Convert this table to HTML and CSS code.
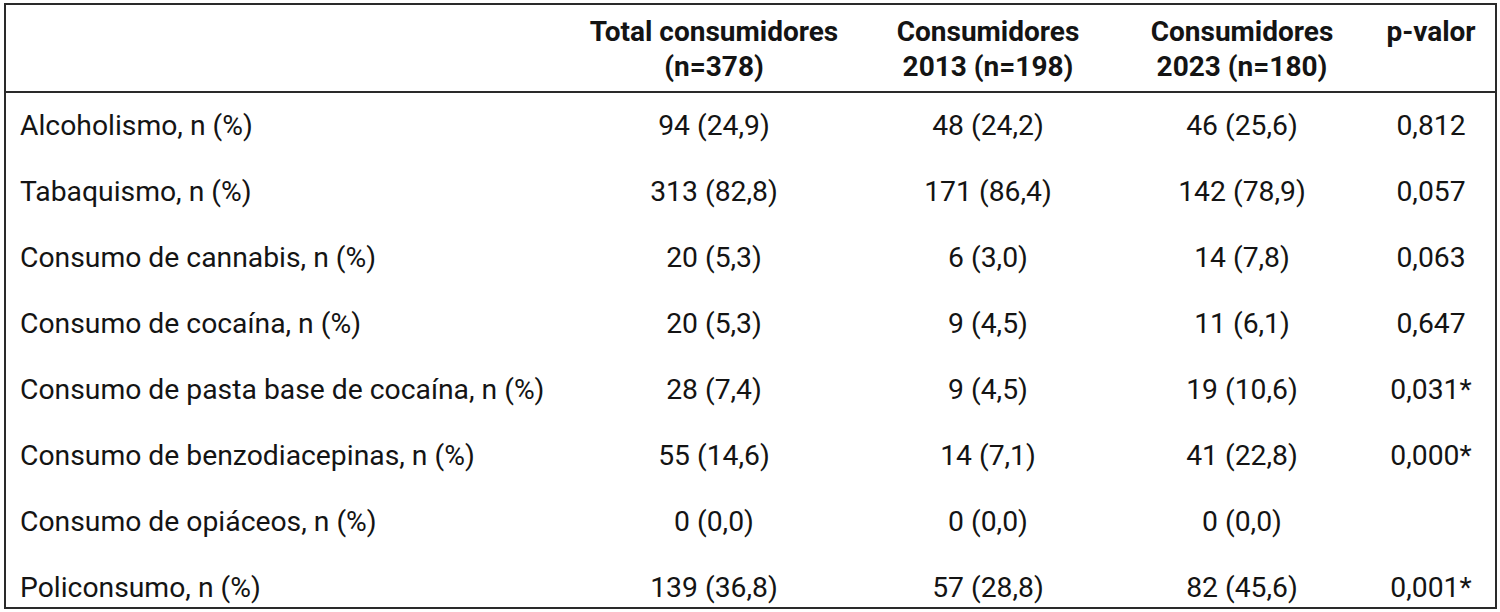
FILE: index.html
```html
<!DOCTYPE html>
<html lang="es">
<head>
<meta charset="utf-8">
<link rel="stylesheet" href="styles.css">
</head>
<body>
<table class="tbl">
  <colgroup>
    <col class="c-label">
    <col class="c-total">
    <col class="c-2013">
    <col class="c-2023">
    <col class="c-p">
  </colgroup>
  <thead>
    <tr>
      <th class="h-label"></th>
      <th>Total consumidores<br>(n=378)</th>
      <th>Consumidores<br>2013 (n=198)</th>
      <th>Consumidores<br>2023 (n=180)</th>
      <th class="h-p">p-valor</th>
    </tr>
  </thead>
  <tbody>
    <tr><td class="label">Alcoholismo, n (%)</td><td>94 (24,9)</td><td>48 (24,2)</td><td>46 (25,6)</td><td>0,812</td></tr>
    <tr><td class="label">Tabaquismo, n (%)</td><td>313 (82,8)</td><td>171 (86,4)</td><td>142 (78,9)</td><td>0,057</td></tr>
    <tr><td class="label">Consumo de cannabis, n (%)</td><td>20 (5,3)</td><td>6 (3,0)</td><td>14 (7,8)</td><td>0,063</td></tr>
    <tr><td class="label">Consumo de cocaína, n (%)</td><td>20 (5,3)</td><td>9 (4,5)</td><td>11 (6,1)</td><td>0,647</td></tr>
    <tr><td class="label">Consumo de pasta base de cocaína, n (%)</td><td>28 (7,4)</td><td>9 (4,5)</td><td>19 (10,6)</td><td>0,031*</td></tr>
    <tr><td class="label">Consumo de benzodiacepinas, n (%)</td><td>55 (14,6)</td><td>14 (7,1)</td><td>41 (22,8)</td><td>0,000*</td></tr>
    <tr><td class="label">Consumo de opiáceos, n (%)</td><td>0 (0,0)</td><td>0 (0,0)</td><td>0 (0,0)</td><td></td></tr>
    <tr class="last"><td class="label">Policonsumo, n (%)</td><td>139 (36,8)</td><td>57 (28,8)</td><td>82 (45,6)</td><td>0,001*</td></tr>
  </tbody>
</table>
</body>
</html>
```

FILE: styles.css
```css
html, body {
  margin: 0;
  padding: 0;
  background: #ffffff;
}
body {
  padding: 3px 0 0 4px;
  font-family: Roboto, "Liberation Sans", sans-serif;
  color: #141414;
}
.tbl {
  border-collapse: collapse;
  table-layout: fixed;
  width: 1491px;
  border: 2px solid #2a2a2a;
  font-size: 28px;
}
.c-label { width: 564px; }
.c-total { width: 290px; }
.c-2013 { width: 258px; }
.c-2023 { width: 250px; }
.c-p { width: 129px; }

.tbl th {
  font-weight: 700;
  text-align: center;
  vertical-align: top;
  line-height: 35px;
  padding: 9px 0 7px 0;
  border-bottom: 2px solid #2a2a2a;
}
.tbl td {
  font-size: 28.3px;
  text-align: center;
  line-height: 30px;
  padding: 18px 0 18px 0;
  white-space: nowrap;
}
.tbl td.label {
  text-align: left;
  padding-left: 14px;
}
.tbl tr.last td {
  padding-bottom: 4px;
}
```
